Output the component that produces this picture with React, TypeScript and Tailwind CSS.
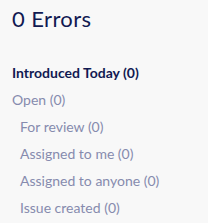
import React from "react";

const subItems = ["For review (0)", "Assigned to me (0)", "Assigned to anyone (0)", "Issue created (0)"];

const App: React.FC = () => (
  <div className="w-[208px] h-[223px] bg-[#f8f8f8] font-['Lato',sans-serif] px-3 overflow-hidden">
    <h1 className="pt-[5px] text-[22px] leading-[28px] tracking-[0.4px] text-[#111a52]">0 Errors</h1>
    <ul className="mt-[26px] text-[14px] leading-[27px]">
      <li className="font-bold text-[#111a52]">Introduced Today (0)</li>
      <li className="text-[#868bae]">Open (0)</li>
      {subItems.map((s) => (
        <li key={s} className="pl-2 text-[#868bae]">{s}</li>
      ))}
    </ul>
  </div>
);

export default App;
